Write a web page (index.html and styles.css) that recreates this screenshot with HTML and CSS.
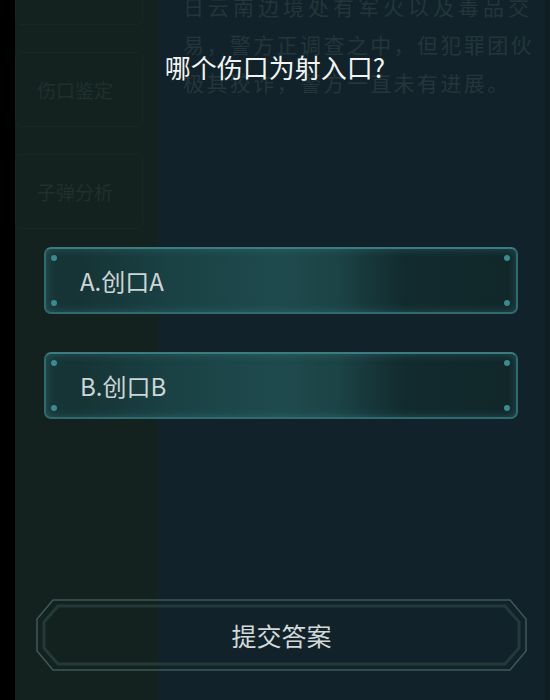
FILE: index.html
```html
<!DOCTYPE html>
<html lang="zh">
<head>
    <meta charset="UTF-8">
    <meta name="viewport" content="width=device-width, initial-scale=1.0">
    <title>伤口鉴定</title>
    <link rel="stylesheet" href="styles.css">
</head>
<body>
    <div class="screen">
        <!-- 左侧菜单 (背景) -->
        <div class="sidebar">
            <div class="side-item side-top"></div>
            <div class="side-item"><span>伤口鉴定</span></div>
            <div class="side-item"><span>子弹分析</span></div>
        </div>

        <!-- 案情描述 (背景) -->
        <div class="main">
            <p class="story"><span class="wide">日云南边境处有军火以及毒品交</span><br>易，警方正调查之中，但犯罪团伙<br>极其狡诈，警方一直未有进展。</p>
        </div>

        <!-- 问答弹层 -->
        <div class="quiz">
            <h1 class="question">哪个伤口为射入口?</h1>

            <div class="options">
                <div class="option">
                    <i class="dot tl"></i><i class="dot bl"></i><i class="dot tr"></i><i class="dot br"></i>
                    <span>A.创口A</span>
                </div>
                <div class="option">
                    <i class="dot tl"></i><i class="dot bl"></i><i class="dot tr"></i><i class="dot br"></i>
                    <span>B.创口B</span>
                </div>
            </div>

            <button type="button" class="submit">
                <svg class="submit-frame" width="491" height="72" viewBox="0 0 491 72">
                    <polygon points="17,1 474,1 490,20 490,52 474,71 17,71 1,52 1,20" fill="none" stroke="#3f5856" stroke-width="1.5"/>
                    <polygon points="22,7 469,7 483,23 483,49 469,65 22,65 8,49 8,23" fill="none" stroke="#243a38" stroke-width="3"/>
                </svg>
                <span>提交答案</span>
            </button>
        </div>
    </div>
</body>
</html>
```

FILE: styles.css
```css
body {
    margin: 0;
    padding: 0;
    background-color: #000000;
    font-family: "Noto Sans CJK SC", "Noto Sans", sans-serif;
}

.screen {
    position: relative;
    display: flex;
    margin-left: 15px;
    width: 535px;
    height: 700px;
    overflow: hidden;
    background-color: #13221f;
}

.sidebar {
    width: 143px;
    display: flex;
    flex-direction: column;
    gap: 27px;
    margin-top: -50px;
}

.side-item {
    height: 73px;
    margin-right: 15px;
    border: 1px solid #172722;
    border-radius: 6px;
    display: flex;
    align-items: center;
    padding-left: 21px;
    color: #1f302e;
    font-size: 19px;
}

.main {
    flex: 1;
    background-color: #11222a;
    border-right: 5px solid #0f1e22;
    padding-left: 25px;
}

.story {
    margin: -13px 0 0 0;
    font-size: 21px;
    line-height: 38px;
    letter-spacing: 2.4px;
    white-space: nowrap;
    color: #24363a;
}

.story .wide {
    letter-spacing: 4px;
}

/* 弹层盖在背景之上 */
.quiz {
    position: absolute;
    top: 0;
    left: 0;
    right: 0;
    bottom: 0;
    display: flex;
    flex-direction: column;
    padding: 52px 23px 29px 21px;
}

.question {
    margin: 0;
    text-align: center;
    font-size: 26px;
    font-weight: normal;
    line-height: 30px;
    color: #f2f4f4;
    padding-right: 13px;
}

.options {
    display: flex;
    flex-direction: column;
    gap: 38px;
    margin: 165px 9px 0 8px;
}

.option {
    position: relative;
    height: 63px;
    border: 2px solid #2e6a6e;
    border-top-color: #3a7c80;
    border-radius: 7px;
    background: linear-gradient(90deg, #173638 0%, #163335 6%, #1a4245 28%, #1f4a4d 50%, #1c4346 62%, #122b2e 76%, #11272a 100%);
    box-shadow: inset 0 0 10px rgba(70, 150, 155, 0.35);
    display: flex;
    align-items: center;
    padding-left: 34px;
    color: #cdd6d6;
    font-size: 24px;
}

.dot {
    position: absolute;
    width: 6px;
    height: 6px;
    border-radius: 50%;
    background-color: #3c8a91;
}

.tl { top: 6px; left: 5px; }
.bl { bottom: 6px; left: 5px; }
.tr { top: 6px; right: 6px; }
.br { bottom: 6px; right: 6px; }

.submit {
    position: relative;
    margin-top: auto;
    width: 491px;
    height: 72px;
    padding: 0;
    border: none;
    background: transparent;
    font-family: inherit;
    font-size: 25px;
    color: #d3d9d9;
    cursor: pointer;
}

.submit-frame {
    position: absolute;
    top: 0;
    left: 0;
}

.submit span {
    position: relative;
}
```
